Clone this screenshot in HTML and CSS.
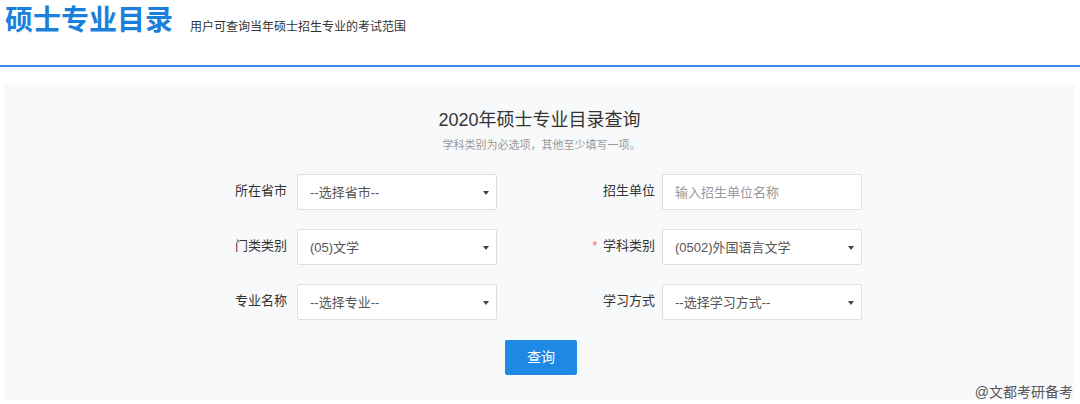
FILE: index.html
```html
<!DOCTYPE html>
<html lang="zh-CN">
<head>
<meta charset="utf-8" />
<title>硕士专业目录</title>
<link rel="stylesheet" href="styles.css">
</head>
<body>
<div class="header">
	<h1 class="title">硕士专业目录</h1>
	<span class="subtitle">用户可查询当年硕士招生专业的考试范围</span>
</div>
<div class="panel">
	<h2 class="panel-title">2020年硕士专业目录查询</h2>
	<p class="panel-tip">学科类别为必选项，其他至少填写一项。</p>
	<div class="form">
		<div class="field">
			<label>所在省市</label>
			<div class="select">--选择省市--<span class="arrow"></span></div>
		</div>
		<div class="field">
			<label>招生单位</label>
			<div class="input placeholder">输入招生单位名称</div>
		</div>
		<div class="field">
			<label>门类类别</label>
			<div class="select">(05)文学<span class="arrow"></span></div>
		</div>
		<div class="field">
			<label><span class="star">*</span> 学科类别</label>
			<div class="select">(0502)外国语言文学<span class="arrow"></span></div>
		</div>
		<div class="field">
			<label>专业名称</label>
			<div class="select">--选择专业--<span class="arrow"></span></div>
		</div>
		<div class="field">
			<label>学习方式</label>
			<div class="select">--选择学习方式--<span class="arrow"></span></div>
		</div>
	</div>
	<div class="actions">
		<span class="btn">查询</span>
	</div>
	<div class="watermark">@文都考研备考</div>
</div>
</body>
</html>
```

FILE: styles.css
```css
* {padding:0;margin:0;box-sizing:border-box;}
body {font-family:"Liberation Sans","Noto Sans CJK SC",sans-serif;background:#fff;color:#333;}
/*头部*/
.header {height:67px;padding-left:5px;border-bottom:2px solid #3a8ee6;display:flex;align-items:flex-start;}
.title {font-size:28px;line-height:40px;font-weight:bold;color:#1b80dc;margin-top:1px;}
.subtitle {font-size:12px;line-height:16px;color:#333;margin-left:17px;margin-top:19px;}
/*查询面板*/
.panel {position:relative;margin:18px 5px 0 4px;height:315px;background:#f8f9fa;padding-top:23px;}
.panel-title {font-size:18px;line-height:24px;font-weight:normal;text-align:center;color:#333;}
.panel-tip {font-size:11px;line-height:16px;color:#999;text-align:center;margin-top:5px;margin-left:4px;}
.form {width:655px;margin:21px 0 0 203px;display:grid;grid-template-columns:290px 290px;column-gap:75px;row-gap:19px;}
.field {display:flex;align-items:center;height:36px;}
.field label {width:90px;padding-right:10px;text-align:right;font-size:13px;line-height:18px;color:#333;margin-top:-2px;}
.field:nth-child(even) label {padding-right:7px;}
.star {color:#f07070;margin-right:2px;}
.select, .input {position:relative;width:200px;height:36px;line-height:36px;padding-left:12px;background:#fff;border:1px solid #dcdfe3;border-radius:2px;font-size:13px;color:#555;}
.placeholder {color:#999;}
.arrow {position:absolute;right:7px;top:16px;width:0;height:0;border-left:3px solid transparent;border-right:3px solid transparent;border-top:4px solid #444;}
.actions {margin-top:20px;text-align:center;}
.btn {display:inline-block;width:72px;height:35px;line-height:35px;background:#1e88e5;color:#fff;font-size:14px;border-radius:2px;margin-left:3px;}
.watermark {position:absolute;right:2px;bottom:-1px;font-size:14px;line-height:18px;color:#555;}
```
